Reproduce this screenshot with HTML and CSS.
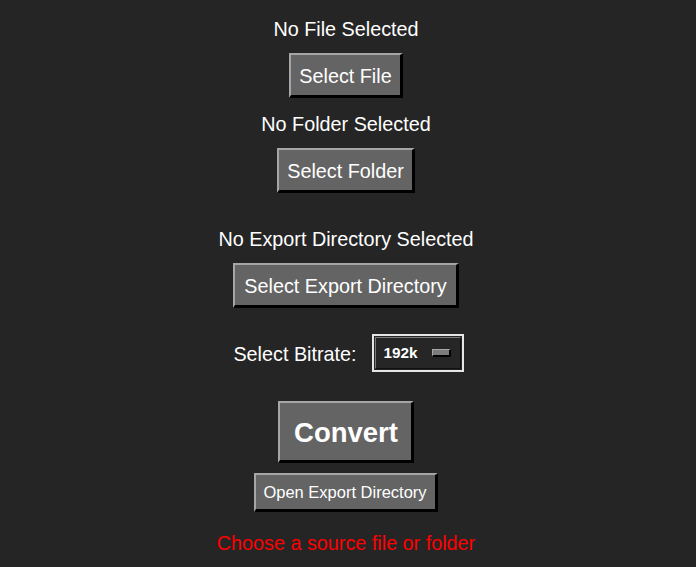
FILE: index.html
```html
<!DOCTYPE html>
<html>
<head>
<meta charset="utf-8">
<link rel="stylesheet" href="styles.css">
</head>
<body>
<div class="app">
  <div class="label l1">No File Selected</div>
  <div class="btn b1">Select File</div>
  <div class="label l2">No Folder Selected</div>
  <div class="btn b2">Select Folder</div>
  <div class="label l3">No Export Directory Selected</div>
  <div class="btn b3">Select Export Directory</div>
  <div class="bitrate-row">
    <span class="bitrate-label">Select Bitrate:</span>
    <div class="option">
      <div class="option-inner">
        <span class="option-value">192k</span>
        <span class="indicator"></span>
      </div>
    </div>
  </div>
  <div class="btn convert">Convert</div>
  <div class="btn open">Open Export Directory</div>
  <div class="label status">Choose a source file or folder</div>
</div>
</body>
</html>
```

FILE: styles.css
```css
html, body {
  margin: 0;
  padding: 0;
  background: #252525;
  height: 100%;
}
body {
  font-family: "Liberation Sans", Arial, sans-serif;
  color: #ffffff;
}
.app {
  display: flex;
  flex-direction: column;
  align-items: center;
  padding-top: 17px;
  padding-right: 4px;
}
.label {
  font-size: 19.8px;
  line-height: 24px;
  height: 24px;
  white-space: nowrap;
}
.btn {
  background: #646464;
  color: #ffffff;
  border-style: solid;
  border-width: 2px 3px 3px 2px;
  border-color: #a6a6a6 #000000 #000000 #a6a6a6;
  font-size: 19.8px;
  padding-top: 2px;
  line-height: 38px;
  height: 38px;
  white-space: nowrap;
  text-align: center;
}
.b1 { margin-top: 12px; padding-left: 8px; padding-right: 8px; }
.l2 { margin-top: 14px; }
.b2 { margin-top: 12px; padding-left: 8px; padding-right: 8px; }
.l3 { margin-top: 34px; }
.b3 { margin-top: 12px; padding-left: 9px; padding-right: 9px; }

.bitrate-row {
  margin-top: 26px;
  margin-left: 5px;
  display: flex;
  align-items: center;
  gap: 15px;
  height: 37px;
}
.bitrate-label {
  font-size: 19.8px;
  line-height: 24px;
  position: relative;
  top: 1px;
}
.option {
  width: 92px;
  height: 38px;
  box-sizing: border-box;
  border: 2px solid #e6e6e6;
  padding: 1px;
  background: #262626;
}
.option-inner {
  height: 100%;
  box-sizing: border-box;
  border-style: solid;
  border-width: 1px;
  border-color: #7a7a7a #101010 #101010 #7a7a7a;
  display: flex;
  align-items: center;
  padding-left: 8px;
}
.option-value {
  font-weight: bold;
  font-size: 15.3px;
  line-height: 18px;
  width: 41px;
}
.indicator {
  margin-left: 7px;
  width: 19px;
  height: 8px;
  box-sizing: border-box;
  background: #7c7c7c;
  border-style: solid;
  border-width: 1px 2px 2px 1px;
  border-color: #a8a8a8 #000000 #000000 #a8a8a8;
}

.convert {
  margin-top: 30px;
  font-size: 27.5px;
  font-weight: bold;
  line-height: 55px;
  height: 55px;
  padding: 2px 13px 0 14px;
}
.open {
  margin-top: 10px;
  font-size: 16.5px;
  line-height: 33px;
  height: 33px;
  padding: 1px 8px 0 7px;
}
.status {
  margin-top: 19px;
  color: #ff0000;
}
```
